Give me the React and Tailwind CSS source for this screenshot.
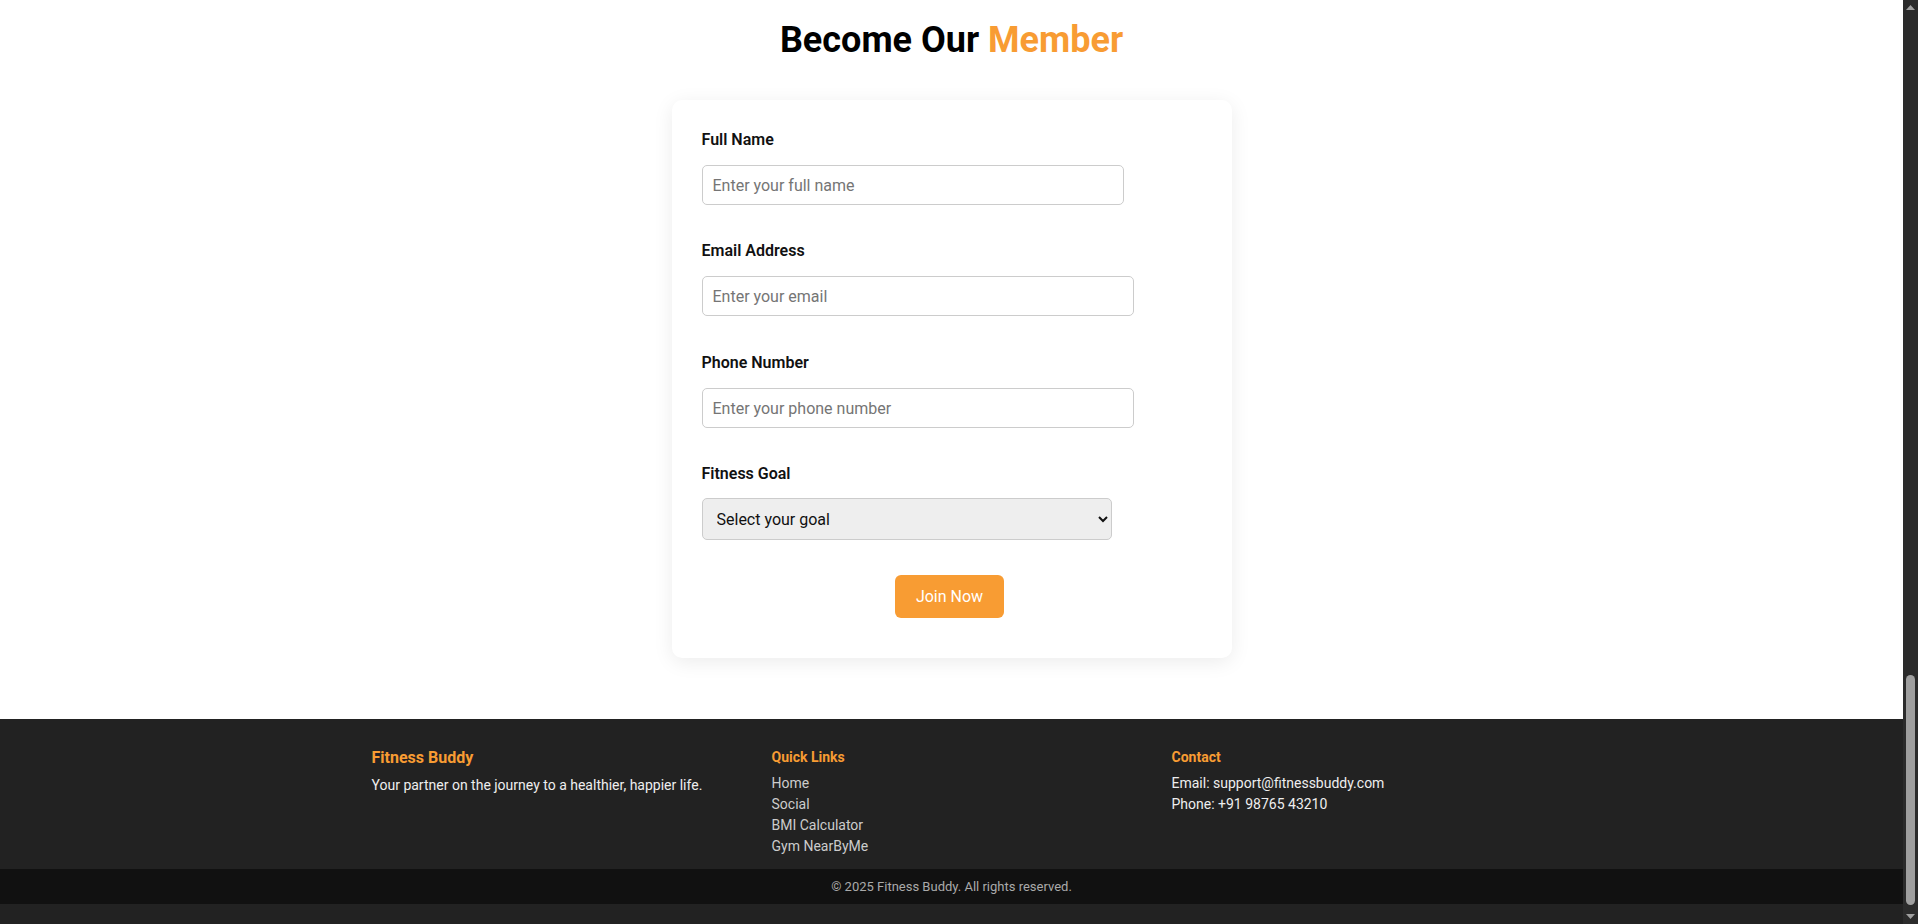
import React, { useState } from "react";

const Field = ({ label, children, className = "mb-[36px]", labelClass = "mb-[15px]" }) => (
  <div className={className}>
    <label className={`block text-[16px] font-semibold leading-[20px] text-[#111] ${labelClass}`}>
      {label}
    </label>
    {children}
  </div>
);

const inputClass =
  "block h-[40px] rounded-[5px] border border-[#ccc] bg-white px-[10px] text-[16px] text-[#111] outline-none placeholder:text-[#757575]";

// window scrollbar, page is scrolled to the bottom
const Scrollbar = () => (
  <div className="flex w-[15px] shrink-0 flex-col bg-[#2b2b2b]">
    <div className="flex h-[15px] items-center justify-center">
      <svg width="9" height="5" viewBox="0 0 9 5">
        <path d="M0 5 L4.5 0 L9 5 Z" fill="#9f9f9f" />
      </svg>
    </div>
    <div className="flex-1" />
    <div className="mx-auto mb-[4px] h-[230px] w-[9px] rounded-full bg-[#9f9f9f]" />
    <div className="flex h-[15px] items-center justify-center">
      <svg width="9" height="5" viewBox="0 0 9 5">
        <path d="M0 0 L9 0 L4.5 5 Z" fill="#9f9f9f" />
      </svg>
    </div>
  </div>
);

const App = () => {
  const [form, setForm] = useState({ name: "", email: "", phone: "", goal: "" });
  const update = (key) => (e) => setForm({ ...form, [key]: e.target.value });

  return (
    <div className="flex h-screen overflow-hidden bg-[#222] font-['Roboto',sans-serif]">
      <div className="min-w-0 flex-1">
        <section className="bg-white pt-[18px] pb-[61px]">
          <h2 className="mb-[38px] text-center text-[36px] font-bold leading-[44px] text-black">
            Become Our <span className="text-[#f89c33]">Member</span>
          </h2>

          <form
            className="mx-auto w-[560px] rounded-[10px] bg-white px-[30px] pt-[30px] pb-[40px] shadow-[0_4px_20px_rgba(0,0,0,0.08)]"
            onSubmit={(e) => e.preventDefault()}
          >
            <Field label="Full Name">
              <input
                type="text"
                value={form.name}
                onChange={update("name")}
                placeholder="Enter your full name"
                className={`${inputClass} w-[422px]`}
              />
            </Field>
            <Field label="Email Address" className="mb-[37px]">
              <input
                type="email"
                value={form.email}
                onChange={update("email")}
                placeholder="Enter your email"
                className={`${inputClass} w-[432px]`}
              />
            </Field>
            <Field label="Phone Number">
              <input
                type="tel"
                value={form.phone}
                onChange={update("phone")}
                placeholder="Enter your phone number"
                className={`${inputClass} w-[432px]`}
              />
            </Field>
            <Field label="Fitness Goal" className="mb-[35px]" labelClass="mb-[14px]">
              <select
                value={form.goal}
                onChange={update("goal")}
                className="block h-[42px] w-[410px] rounded-[5px] border border-[#ccc] bg-[#eee] px-[10px] text-[16px] text-[#111]"
              >
                <option value="">Select your goal</option>
                <option value="weight-loss">Weight Loss</option>
                <option value="muscle-gain">Muscle Gain</option>
                <option value="endurance">Endurance</option>
                <option value="general">General Fitness</option>
              </select>
            </Field>
            <div className="flex justify-center pr-[4px]">
              <button
                type="submit"
                className="rounded-[6px] bg-[#f89c33] px-[21px] py-[12px] text-[16px] leading-[19px] text-white"
              >
                Join Now
              </button>
            </div>
          </form>
        </section>

        <footer>
          <div className="bg-[#222] pt-[26px] pb-[12px]">
            <div className="mx-auto flex max-w-[1200px] gap-[40px] px-[20px]">
              <div className="flex-1">
                <h3 className="mb-[4px] text-[16px] font-bold leading-[26px] text-[#f89c33]">
                  Fitness Buddy
                </h3>
                <p className="text-[14px] leading-[21px] text-[#eee]">
                  Your partner on the journey to a healthier, happier life.
                </p>
              </div>
              <div className="flex-1">
                <h4 className="mb-[4px] text-[14px] font-bold leading-[24px] text-[#f89c33]">
                  Quick Links
                </h4>
                <ul className="text-[14px] leading-[21px] text-[#ccc]">
                  <li>Home</li>
                  <li>Social</li>
                  <li>BMI Calculator</li>
                  <li>Gym NearByMe</li>
                </ul>
              </div>
              <div className="flex-1">
                <h4 className="mb-[4px] text-[14px] font-bold leading-[24px] text-[#f89c33]">
                  Contact
                </h4>
                <p className="text-[14px] leading-[21px] text-[#eee]">
                  Email: support@fitnessbuddy.com
                </p>
                <p className="text-[14px] leading-[21px] text-[#eee]">Phone: +91 98765 43210</p>
              </div>
            </div>
          </div>
          <div className="h-[35px] bg-[#111] text-center text-[13px] leading-[35px] text-[#aaa]">
            © 2025 Fitness Buddy. All rights reserved.
          </div>
          <div className="h-[20px] bg-[#222]" />
        </footer>
      </div>
      <Scrollbar />
    </div>
  );
};

export default App;
